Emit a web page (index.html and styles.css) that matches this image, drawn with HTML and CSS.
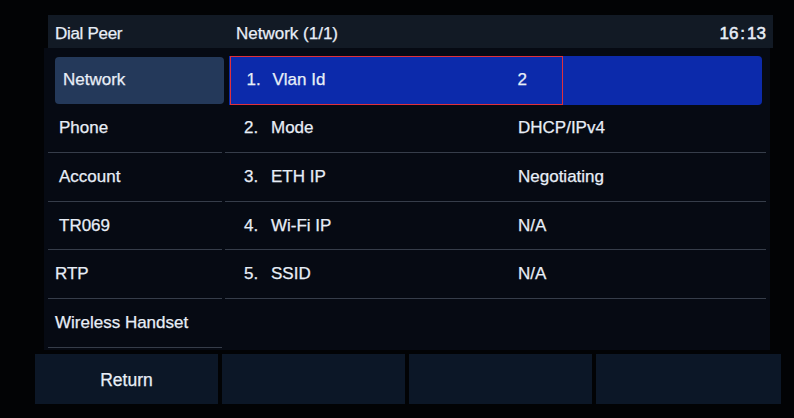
FILE: index.html
```html
<!DOCTYPE html>
<html>
<head>
<meta charset="utf-8">
<link rel="stylesheet" href="styles.css">
</head>
<body>
<div class="screen">
  <div class="header">
    <span class="hdr-left">Dial Peer</span>
    <span class="hdr-title">Network (1/1)</span>
    <span class="hdr-time">16<span class="colon">:</span>13</span>
  </div>
  <div class="main">
    <div class="menu">
      <div class="mrow"><div class="mbtn">Network</div></div>
      <div class="mrow line">Phone</div>
      <div class="mrow line">Account</div>
      <div class="mrow line">TR069</div>
      <div class="mrow line edge">RTP</div>
      <div class="mrow line edge">Wireless Handset</div>
    </div>
    <div class="list">
      <div class="lrow active">
        <div class="focus">
          <span class="num">1.</span><span class="label">Vlan Id</span><span class="value">2</span>
        </div>
      </div>
      <div class="lrow line"><span class="num">2.</span><span class="label">Mode</span><span class="value">DHCP/IPv4</span></div>
      <div class="lrow line"><span class="num">3.</span><span class="label">ETH IP</span><span class="value">Negotiating</span></div>
      <div class="lrow line"><span class="num">4.</span><span class="label">Wi-Fi IP</span><span class="value">N/A</span></div>
      <div class="lrow line"><span class="num">5.</span><span class="label">SSID</span><span class="value">N/A</span></div>
      <div class="lrow"></div>
    </div>
  </div>
  <div class="softkeys">
    <div class="key">Return</div>
    <div class="key"></div>
    <div class="key"></div>
    <div class="key"></div>
  </div>
</div>
</body>
</html>
```
FILE: styles.css
```css
html, body {
  margin: 0;
  padding: 0;
  background: #020305;
}
body {
  width: 794px;
  height: 418px;
  overflow: hidden;
  font-family: "Liberation Sans", Arial, sans-serif;
  font-size: 17px;
  color: #e8eef7;
  -webkit-text-stroke: 0.25px #e8eef7;
}
.screen {
  padding-top: 15px;
}
.header {
  margin-left: 48px;
  width: 725px;
  height: 33px;
  padding-top: 4px;
  box-sizing: border-box;
  background: #121a25;
  display: flex;
  align-items: center;
  font-size: 17px;
}
.hdr-left {
  width: 181px;
  padding-left: 7px;
  letter-spacing: -0.3px;
}
.hdr-title {
  flex: 1;
}
.hdr-time {
  padding-right: 7px;
  font-size: 17px;
  -webkit-text-stroke: 0.5px #e8eef7;
}
.colon {
  margin: 0 2px;
}
.main {
  margin-left: 44px;
  width: 726px;
  height: 302px;
  padding-top: 8px;
  box-sizing: border-box;
  background: #060a13;
  display: grid;
  grid-template-columns: 180px 1fr;
}
.menu {
  padding-left: 4px;
}
.mrow {
  height: 48.6px;
  box-sizing: border-box;
  display: flex;
  align-items: center;
  padding-left: 11px;
  padding-right: 2px;
}
.mrow.edge {
  padding-left: 7px;
}
.mrow:first-child {
  padding: 1px 0 1px 7px;
}
.line {
  border-bottom: 1px solid #363d4a;
}
.mrow.line {
  margin-right: 2px;
}
.mbtn {
  width: 100%;
  height: 100%;
  background: #24395a;
  border-radius: 4px;
  display: flex;
  align-items: center;
  padding-left: 8px;
  box-sizing: border-box;
}
.list {
  margin-left: 1px;
  margin-right: 4px;
}
.lrow {
  height: 48.6px;
  box-sizing: border-box;
  display: flex;
  align-items: center;
  padding-left: 19px;
}
.lrow.active {
  margin: 0 4px;
  padding: 0;
  background: #0c2aab;
  border-radius: 0 4px 4px 0;
  align-items: stretch;
}
.focus {
  width: 333px;
  margin-left: 1px;
  border: 1.5px solid #e0303c;
  box-sizing: border-box;
  display: flex;
  align-items: center;
  padding-left: 15.5px;
}
.focus .num {
  width: 26px;
}
.focus .label {
  width: 245px;
}
.num {
  width: 27px;
}
.label {
  width: 247px;
}
.value {
  white-space: nowrap;
}
.softkeys {
  margin-top: 4px;
  margin-left: 35px;
  display: flex;
  gap: 4px;
}
.key {
  width: 183px;
  height: 50px;
  background: #0c1727;
  display: flex;
  align-items: center;
  justify-content: center;
  font-size: 17.5px;
  padding-top: 2px;
  box-sizing: border-box;
}
.key:last-child {
  width: 185px;
}
```
